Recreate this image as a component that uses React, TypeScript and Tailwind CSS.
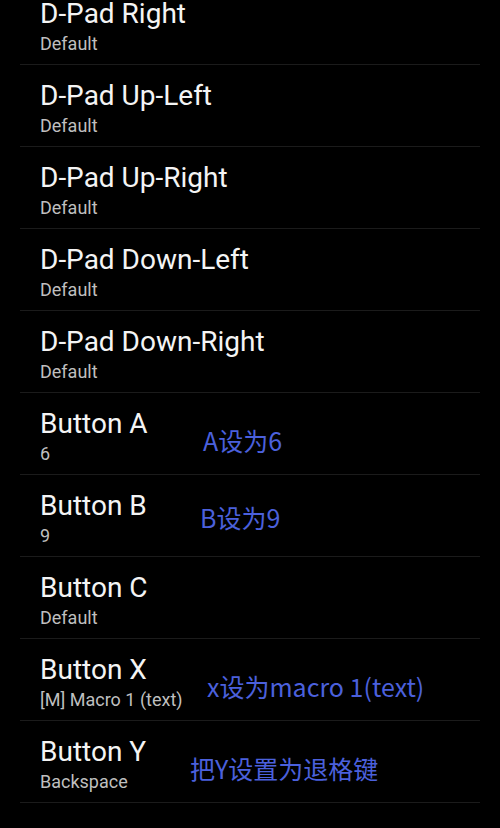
import React from 'react'

type Row = { title: string; value: string; note?: string; noteClass?: string }

const rows: Row[] = [
  { title: 'D-Pad Right', value: 'Default' },
  { title: 'D-Pad Up-Left', value: 'Default' },
  { title: 'D-Pad Up-Right', value: 'Default' },
  { title: 'D-Pad Down-Left', value: 'Default' },
  { title: 'D-Pad Down-Right', value: 'Default' },
  { title: 'Button A', value: '6', note: 'A设为6', noteClass: 'left-[183px] top-[31px]' },
  { title: 'Button B', value: '9', note: 'B设为9', noteClass: 'left-[180px] top-[26px]' },
  { title: 'Button C', value: 'Default' },
  { title: 'Button X', value: '[M] Macro 1 (text)', note: 'x设为macro 1(text)', noteClass: 'left-[187px] top-[31px]' },
  { title: 'Button Y', value: 'Backspace', note: '把Y设置为退格键', noteClass: 'left-[170px] top-[31px]' },
]

export default function App() {
  return (
    <div className="w-[500px] h-[828px] overflow-hidden bg-black font-['Roboto',sans-serif]">
      <div className="mt-[-17px] px-5">
        {rows.map((r) => (
          <div key={r.title} className="relative h-[82px] border-b border-[#1b1b1b] px-5 pt-[15px]">
            <div className="text-[28px] leading-[32px] text-[#f4f4f4]">{r.title}</div>
            <div className="mt-[3px] text-[18px] leading-[22px] text-[#bfbfbf]">{r.value}</div>
            {r.note && (
              <div
                className={`absolute whitespace-nowrap text-[25px] leading-[32px] text-[#4b60dc] font-['Noto_Sans_CJK_SC','Noto_Sans',sans-serif] ${r.noteClass}`}
              >
                {r.note}
              </div>
            )}
          </div>
        ))}
      </div>
    </div>
  )
}
